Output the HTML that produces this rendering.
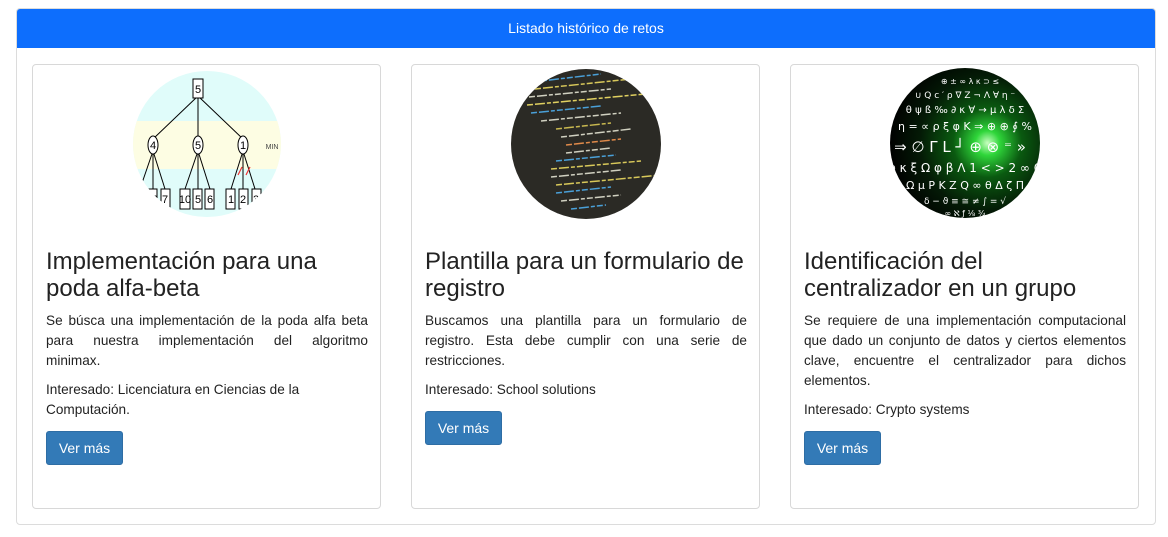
<!DOCTYPE html>
<html><head><meta charset="utf-8"><style>
*{box-sizing:border-box;margin:0;padding:0}
body{width:1168px;height:537px;background:#fff;font-family:"Liberation Sans",sans-serif;color:#212529;position:relative;overflow:hidden}
.outer{position:absolute;left:16px;top:8px;width:1140px;height:517px;border:1px solid #dcdcdc;border-radius:4px;overflow:hidden}
.hdr{height:39px;background:#0d6efd;color:#fff;font-size:14px;text-align:center;line-height:39px}
.card{position:absolute;top:64px;width:349px;height:445px;border:1px solid #d8d8d8;border-radius:4px;background:#fff}
.img{position:absolute;top:4px;left:99px;width:150px;height:150px;border-radius:50%;overflow:hidden}
h3{position:absolute;left:13px;top:183px;width:330px;font-weight:normal;font-size:24px;line-height:27px;color:#222;white-space:nowrap}
.p{position:absolute;left:13px;width:322px;font-size:13.6px;line-height:20px;color:#222}
.p span{display:block;text-align:justify;text-align-last:justify;white-space:nowrap}
.p span.l{text-align-last:left}
.btn{position:absolute;left:13px;width:77px;height:34px;background:#337ab7;border:1px solid #2e6da4;border-radius:3px;color:#fff;font-size:14px;text-align:center;line-height:32px}
</style></head><body>
<div class="outer"><div class="hdr">Listado histórico de retos</div></div>

<div class="card" style="left:32px">
 <div class="img" style="left:100px;top:6px;width:148px;height:146px">
  <svg width="148" height="146" viewBox="0 0 148 146">
   <rect width="148" height="146" fill="#e0fcfa"/>
   <rect y="50" width="148" height="48" fill="#fdfde3"/>
   <g stroke="#000" stroke-width="1" fill="none">
    <line x1="65" y1="25" x2="20" y2="68"/><line x1="65" y1="25" x2="65" y2="68"/><line x1="65" y1="25" x2="110" y2="68"/>
    <line x1="20" y1="80" x2="8" y2="115"/><line x1="20" y1="80" x2="20" y2="118"/><line x1="20" y1="80" x2="32" y2="118"/>
    <line x1="65" y1="80" x2="52" y2="118"/><line x1="65" y1="80" x2="65" y2="118"/><line x1="65" y1="80" x2="77" y2="118"/>
    <line x1="110" y1="80" x2="98" y2="118"/><line x1="110" y1="80" x2="110" y2="118"/><line x1="110" y1="80" x2="122" y2="118"/>
    <rect x="60" y="8" width="10" height="19" fill="#fff"/>
    <ellipse cx="20" cy="74" rx="5" ry="9" fill="#fff"/><ellipse cx="65" cy="74" rx="5" ry="9" fill="#fff"/><ellipse cx="110" cy="74" rx="5" ry="9" fill="#fff"/>
    <rect x="14" y="118" width="10" height="20" fill="#fff"/><rect x="28" y="118" width="9" height="20" fill="#fff"/>
    <rect x="47" y="118" width="10" height="20" fill="#fff"/><rect x="60" y="118" width="9" height="20" fill="#fff"/><rect x="72" y="118" width="9" height="20" fill="#fff"/>
    <rect x="93" y="118" width="9" height="20" fill="#fff"/><rect x="106" y="118" width="9" height="20" fill="#fff"/><rect x="119" y="118" width="9" height="20" fill="#fff"/>
   </g>
   <g stroke="#e33" stroke-width="1.2"><line x1="105" y1="104" x2="109" y2="96"/><line x1="113" y1="104" x2="117" y2="96"/></g>
   <g font-family="Liberation Sans" font-size="11" text-anchor="middle" fill="#000">
    <text x="65" y="22">5</text><text x="20" y="78">4</text><text x="65" y="78">5</text><text x="110" y="78">1</text>
    <text x="19" y="132">13</text><text x="32" y="132">7</text><text x="52" y="132">10</text><text x="65" y="132">5</text><text x="77" y="132">6</text>
    <text x="98" y="132">1</text><text x="110" y="132">2</text><text x="123" y="132">3</text>
    <text x="139" y="78" font-size="7" fill="#444">MIN</text>
   </g>
  </svg>
 </div>
 <h3>Implementación para una<br>poda alfa-beta</h3>
 <div class="p" style="top:246px"><span>Se búsca una implementación de la poda alfa beta</span><span>para nuestra implementación del algoritmo</span><span class="l">minimax.</span></div>
 <div class="p" style="top:315px"><span class="l">Interesado: Licenciatura en Ciencias de la</span><span class="l">Computación.</span></div>
 <div class="btn" style="top:366px">Ver más</div>
</div>

<div class="card" style="left:411px">
 <div class="img" style="left:99px;top:4px;background:#2b2a25">
  <svg width="150" height="150" viewBox="0 0 150 150">
   <g stroke-width="1.5" stroke-dasharray="6 2 10 2 4 2">
    <line x1="30" y1="12" x2="90" y2="5" stroke="#4aa0d8"/><line x1="24" y1="20" x2="120" y2="10" stroke="#d8c85a"/>
    <line x1="18" y1="28" x2="100" y2="20" stroke="#d0d0c0"/><line x1="16" y1="36" x2="145" y2="24" stroke="#e0d060"/>
    <line x1="20" y1="44" x2="90" y2="37" stroke="#4aa0d8"/><line x1="30" y1="52" x2="110" y2="44" stroke="#d0d0c0"/>
    <line x1="45" y1="60" x2="100" y2="54" stroke="#c8b850"/><line x1="50" y1="68" x2="120" y2="60" stroke="#d0d0c0"/>
    <line x1="55" y1="76" x2="110" y2="70" stroke="#e08a4a"/><line x1="55" y1="84" x2="100" y2="79" stroke="#d0d0c0"/>
    <line x1="45" y1="92" x2="105" y2="86" stroke="#4aa0d8"/><line x1="40" y1="100" x2="130" y2="92" stroke="#d8c85a"/>
    <line x1="40" y1="108" x2="110" y2="101" stroke="#d0d0c0"/><line x1="45" y1="116" x2="150" y2="106" stroke="#d8c85a"/>
    <line x1="45" y1="124" x2="100" y2="118" stroke="#4aa0d8"/><line x1="50" y1="132" x2="110" y2="126" stroke="#d0d0c0"/>
    <line x1="60" y1="140" x2="95" y2="136" stroke="#4aa0d8"/>
   </g>
  </svg>
 </div>
 <h3>Plantilla para un formulario de<br>registro</h3>
 <div class="p" style="top:246px"><span>Buscamos una plantilla para un formulario de</span><span>registro. Esta debe cumplir con una serie de</span><span class="l">restricciones.</span></div>
 <div class="p" style="top:315px"><span class="l">Interesado: School solutions</span></div>
 <div class="btn" style="top:346px">Ver más</div>
</div>

<div class="card" style="left:790px">
 <div class="img" style="left:99px;top:3px;background:radial-gradient(circle at 65% 50%,#c8ffc0 0,#2fd63a 10%,#0a5a10 28%,#041a06 55%,#000 80%)">
  <svg width="150" height="150" viewBox="0 0 150 150">
   <g fill="#fff" font-family="DejaVu Sans" text-anchor="middle">
    <text x="80" y="16" font-size="8">⊕ ± ∞ λ κ ⊃ ≤</text>
    <text x="75" y="30" font-size="9">∪ Q c ′ ρ ∇ Z ¬ Λ ∀ η ⁻</text>
    <text x="75" y="45" font-size="10">θ ψ ß ‰ ∂ κ ∀ → μ λ δ Σ</text>
    <text x="75" y="62" font-size="11">η = ∝ ρ ξ φ K ⇒ ⊕ ⊕ ∮ %</text>
    <text x="70" y="84" font-size="15">⇒ ∅ Γ L ┘ ⊕ ⊗ ⁼ »</text>
    <text x="75" y="104" font-size="12">φ κ ξ Ω φ β Λ 1 &lt; &gt; 2 ∞ C</text>
    <text x="75" y="121" font-size="11">≈ Ω μ P K Z Q ∞ θ Δ ζ Π ±</text>
    <text x="75" y="136" font-size="9">δ − ϑ ≡ ≅ ≠ ∫ = √</text>
    <text x="75" y="148" font-size="8">∞ ℵ ƒ ⅛ ¾</text>
   </g>
  </svg>
 </div>
 <h3>Identificación del<br>centralizador en un grupo</h3>
 <div class="p" style="top:246px"><span>Se requiere de una implementación computacional</span><span>que dado un conjunto de datos y ciertos elementos</span><span>clave, encuentre el centralizador para dichos</span><span class="l">elementos.</span></div>
 <div class="p" style="top:335px"><span class="l">Interesado: Crypto systems</span></div>
 <div class="btn" style="top:366px">Ver más</div>
</div>
</body></html>
